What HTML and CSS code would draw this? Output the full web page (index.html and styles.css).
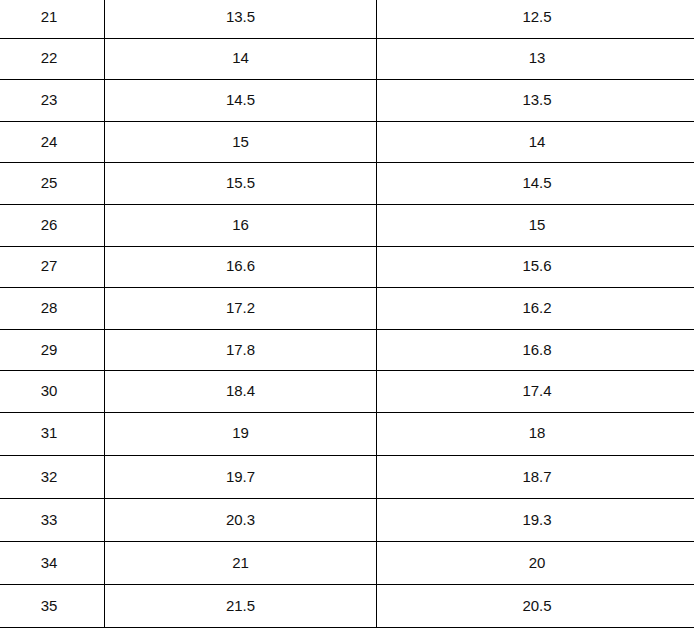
FILE: index.html
```html
<!DOCTYPE html>
<html>
<head>
<meta charset="utf-8">
<link rel="stylesheet" href="styles.css">
</head>
<body>
<table class="size-table">
  <colgroup>
    <col class="c1"><col class="c2"><col class="c3">
  </colgroup>
  <tbody>
    <tr class="r-a"><td>21</td><td>13.5</td><td>12.5</td></tr>
    <tr class="r-a"><td>22</td><td>14</td><td>13</td></tr>
    <tr class="r-a"><td>23</td><td>14.5</td><td>13.5</td></tr>
    <tr class="r-a"><td>24</td><td>15</td><td>14</td></tr>
    <tr class="r-a"><td>25</td><td>15.5</td><td>14.5</td></tr>
    <tr class="r-a"><td>26</td><td>16</td><td>15</td></tr>
    <tr class="r-a"><td>27</td><td>16.6</td><td>15.6</td></tr>
    <tr class="r-a"><td>28</td><td>17.2</td><td>16.2</td></tr>
    <tr class="r-a"><td>29</td><td>17.8</td><td>16.8</td></tr>
    <tr class="r-a"><td>30</td><td>18.4</td><td>17.4</td></tr>
    <tr class="r-b"><td>31</td><td>19</td><td>18</td></tr>
    <tr class="r-b"><td>32</td><td>19.7</td><td>18.7</td></tr>
    <tr class="r-b"><td>33</td><td>20.3</td><td>19.3</td></tr>
    <tr class="r-b"><td>34</td><td>21</td><td>20</td></tr>
    <tr class="r-b"><td>35</td><td>21.5</td><td>20.5</td></tr>
  </tbody>
</table>
</body>
</html>
```
FILE: styles.css
```css
html, body {
  margin: 0;
  padding: 0;
  background: #fff;
  overflow: hidden;
}
.size-table {
  border-collapse: collapse;
  table-layout: fixed;
  width: 704px;
  margin-left: -7px;
  margin-top: -4px;
  font-family: "Liberation Sans", Arial, sans-serif;
  font-size: 15px;
  color: #111;
}
.c1 { width: 111px; }
.c2 { width: 272px; }
.c3 { width: 321px; }
.size-table td {
  border: 1px solid #000;
  text-align: center;
  vertical-align: middle;
  padding: 0 0 2px 0;
}
.r-a td { height: 38.6px; }
.r-b td { height: 40.1px; }
```
